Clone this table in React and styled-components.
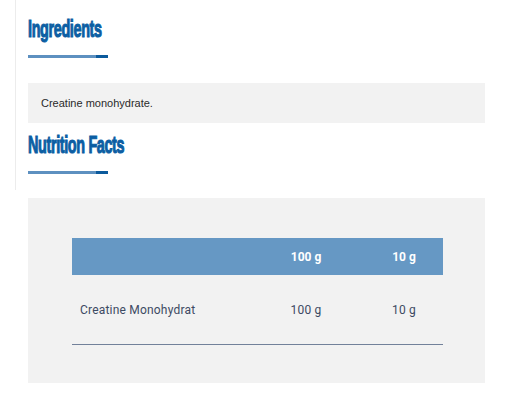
import React from "react";
import styled, { createGlobalStyle } from "styled-components";

const Global = createGlobalStyle`
  html, body { margin: 0; padding: 0; background: #ffffff; }
  body { font-family: "Liberation Sans", Arial, sans-serif; }
`;

const Page = styled.div`
  width: 485px;
  display: flex;
  flex-direction: column;
`;

const Section = styled.section`
  margin-left: 15px;
  border-left: 1px solid #ececec;
  padding: 17px 0 16px 12px;
  display: flex;
  flex-direction: column;
`;

const Heading = styled.h2`
  margin: ${(p) => p.$top || 0}px 0 0 0;
  height: 24px;
  font-family: "Liberation Sans", Arial, sans-serif;
  font-weight: 700;
  font-size: 24px;
  line-height: 24px;
  color: #0b5ea3;
  white-space: nowrap;
  -webkit-text-stroke: 1.1px #0b5ea3;
  letter-spacing: -0.6px;
  span {
    display: inline-block;
    transform: scaleX(0.6);
    transform-origin: left center;
  }
`;

const Bar = styled.div`
  margin-top: 14px;
  width: 80px;
  height: 3px;
  display: flex;
`;

const BarLight = styled.div`
  flex: 1;
  background: #5d90c0;
`;

const BarDark = styled.div`
  width: 12px;
  background: #0b5a9c;
`;

const IngredientBox = styled.div`
  margin-top: 25px;
  height: 40px;
  background: #f2f2f2;
  padding-left: 13px;
  font-size: 11px;
  line-height: 40px;
  color: #2a2a2a;
`;

const NutritionBox = styled.div`
  margin: 8px 0 0 28px;
  width: 457px;
  background: #f2f2f2;
  padding: 40px 42px 38px 44px;
  box-sizing: border-box;
`;

const Row = styled.div`
  display: grid;
  grid-template-columns: 1fr 76px 78px;
  column-gap: 21px;
  align-items: center;
  font-family: Roboto, "Liberation Sans", sans-serif;
  font-size: 12px;
  letter-spacing: ${(p) => (p.$head ? 0 : 0.2)}px;
  height: ${(p) => (p.$head ? 37 : 70)}px;
  background: ${(p) => (p.$head ? "#6698c4" : "transparent")};
  color: ${(p) => (p.$head ? "#ffffff" : "#3d4a63")};
  font-weight: ${(p) => (p.$head ? 700 : 400)};
  border-bottom: ${(p) => (p.$head ? "none" : "1px solid #72819a")};
  box-sizing: border-box;
`;

const Cell = styled.div`
  text-align: ${(p) => (p.$left ? "left" : "center")};
  padding-left: ${(p) => (p.$left ? 8 : 0)}px;
  white-space: nowrap;
`;

const Rule = () => (
  <Bar>
    <BarLight />
    <BarDark />
  </Bar>
);

export default function App() {
  return (
    <>
      <Global />
      <Page>
        <Section>
          <Heading>
            <span>Ingredients</span>
          </Heading>
          <Rule />
          <IngredientBox>Creatine monohydrate.</IngredientBox>
          <Heading $top={10}>
            <span>Nutrition Facts</span>
          </Heading>
          <Rule />
        </Section>
        <NutritionBox>
          <Row $head>
            <Cell $left></Cell>
            <Cell>100 g</Cell>
            <Cell>10 g</Cell>
          </Row>
          <Row>
            <Cell $left>Creatine Monohydrat</Cell>
            <Cell>100 g</Cell>
            <Cell>10 g</Cell>
          </Row>
        </NutritionBox>
      </Page>
    </>
  );
}
